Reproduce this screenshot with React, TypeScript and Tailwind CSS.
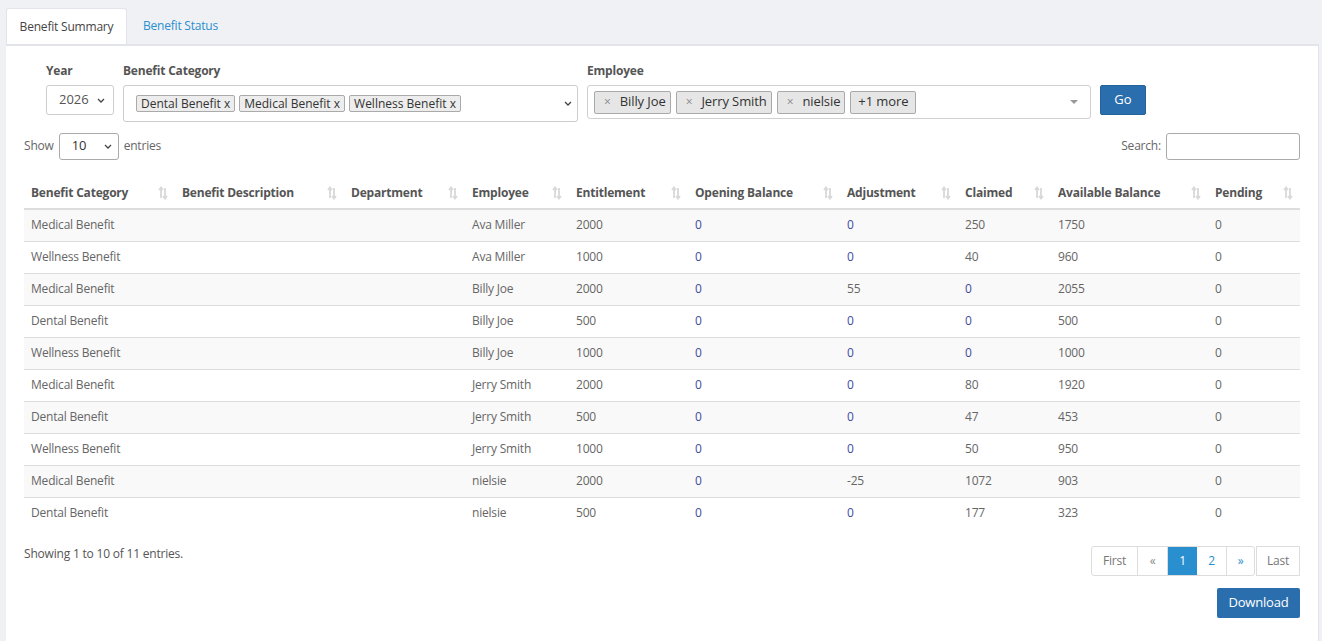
import React from "react";

type Row = {
  cat: string;
  emp: string;
  ent: string;
  open: string;
  adj: string;
  claimed: string;
  avail: string;
  pending: string;
};

const rows: Row[] = [
  { cat: "Medical Benefit", emp: "Ava Miller", ent: "2000", open: "0", adj: "0", claimed: "250", avail: "1750", pending: "0" },
  { cat: "Wellness Benefit", emp: "Ava Miller", ent: "1000", open: "0", adj: "0", claimed: "40", avail: "960", pending: "0" },
  { cat: "Medical Benefit", emp: "Billy Joe", ent: "2000", open: "0", adj: "55", claimed: "0", avail: "2055", pending: "0" },
  { cat: "Dental Benefit", emp: "Billy Joe", ent: "500", open: "0", adj: "0", claimed: "0", avail: "500", pending: "0" },
  { cat: "Wellness Benefit", emp: "Billy Joe", ent: "1000", open: "0", adj: "0", claimed: "0", avail: "1000", pending: "0" },
  { cat: "Medical Benefit", emp: "Jerry Smith", ent: "2000", open: "0", adj: "0", claimed: "80", avail: "1920", pending: "0" },
  { cat: "Dental Benefit", emp: "Jerry Smith", ent: "500", open: "0", adj: "0", claimed: "47", avail: "453", pending: "0" },
  { cat: "Wellness Benefit", emp: "Jerry Smith", ent: "1000", open: "0", adj: "0", claimed: "50", avail: "950", pending: "0" },
  { cat: "Medical Benefit", emp: "nielsie", ent: "2000", open: "0", adj: "-25", claimed: "1072", avail: "903", pending: "0" },
  { cat: "Dental Benefit", emp: "nielsie", ent: "500", open: "0", adj: "0", claimed: "177", avail: "323", pending: "0" },
];

const columns = [
  { label: "Benefit Category", w: "w-[151px]" },
  { label: "Benefit Description", w: "w-[169px]" },
  { label: "Department", w: "w-[121px]" },
  { label: "Employee", w: "w-[104px]" },
  { label: "Entitlement", w: "w-[119px]" },
  { label: "Opening Balance", w: "w-[152px]" },
  { label: "Adjustment", w: "w-[118px]" },
  { label: "Claimed", w: "w-[93px]" },
  { label: "Available Balance", w: "w-[157px]" },
  { label: "Pending", w: "w-[92px]" },
];

function SortIcon() {
  return (
    <svg width="10" height="14" viewBox="0 0 10 14" className="shrink-0">
      <path d="M3 1.5 L3 12 M1 4 L3 1.5 L5 4" stroke="#d9d9d9" strokeWidth="1.8" fill="none" />
      <path d="M7 2 L7 12.5 M5 10 L7 12.5 L9 10" stroke="#d9d9d9" strokeWidth="1.8" fill="none" />
    </svg>
  );
}

function Chevron() {
  return (
    <svg width="8" height="5" viewBox="0 0 8 5">
      <path d="M1 1 L4 4 L7 1" stroke="#444" strokeWidth="1.3" fill="none" />
    </svg>
  );
}

// zero values render as links in the source page
function Num({ v, link }: { v: string; link?: boolean }) {
  return <span className={link ? "text-[#3f4a9c]" : ""}>{v}</span>;
}

export default function App() {
  return (
    <div
      className="min-h-[641px] bg-[#f0f1f5] pt-2 pl-[6px] pr-[3px] text-[13px] text-[#666]"
      style={{ fontFamily: '"Open Sans", "Liberation Sans", sans-serif' }}
    >
      {/* Tabs */}
      <div className="flex">
        <div className="h-9 w-[121px] bg-white rounded-t-[3px] border-t border-x border-[#e2e4ea] flex items-center justify-center text-[#444] text-[12px] tracking-[-0.2px]">
          Benefit Summary
        </div>
        <div className="h-9 w-[107px] flex items-center justify-center text-[#2a8fcf] text-[12px] tracking-[-0.2px]">
          Benefit Status
        </div>
      </div>

      {/* Panel */}
      <div className="bg-white border-t-2 border-r border-[#e2e4ea] min-h-[597px] pl-[18px] pr-[18px] pt-[17px]">
        {/* Filters */}
        <div className="flex items-start pl-[22px]">
          <div className="w-[77px]">
            <div className="font-bold text-[12px] text-[#555] h-[22px] leading-[16px] tracking-[-0.2px]">Year</div>
            <div className="h-[30px] w-[68px] border border-[#ccc] rounded-[3px] flex items-center justify-between pl-[12px] pr-[8px] text-[#555]">
              2026 <Chevron />
            </div>
          </div>
          <div className="w-[464px]">
            <div className="font-bold text-[12px] text-[#555] h-[22px] leading-[16px] tracking-[-0.2px]">Benefit Category</div>
            <div className="h-[37px] w-[455px] border border-[#ccc] rounded-[3px] flex items-center justify-between pl-[12px] pr-[5px]">
              <div className="flex gap-[4px] text-[12px] text-[#333]">
                {["Dental Benefit", "Medical Benefit", "Wellness Benefit"].map((t) => (
                  <span key={t} className="h-[17px] px-[4px] border border-[#aaa] bg-[#ededed] rounded-[2px] flex items-center leading-none">
                    {t} x
                  </span>
                ))}
              </div>
              <Chevron />
            </div>
          </div>
          <div className="w-[513px]">
            <div className="font-bold text-[12px] text-[#555] h-[22px] leading-[16px] tracking-[-0.2px]">Employee</div>
            <div className="h-[34px] w-[504px] border border-[#d0d0d0] rounded-[3px] flex items-center justify-between pl-[6px] pr-[12px]">
              <div className="flex gap-[5px] text-[13px] text-[#333] tracking-[-0.1px]">
                {["Billy Joe", "Jerry Smith", "nielsie"].map((t) => (
                  <span key={t} className="h-[23px] pl-[9px] pr-[4px] border border-[#aaa] bg-[#e6e6e6] rounded-[2px] flex items-center gap-[9px]">
                    <span className="text-[#888] text-[12px]">×</span>
                    {t}
                  </span>
                ))}
                <span className="h-[23px] px-[7px] border border-[#aaa] bg-[#e6e6e6] rounded-[2px] flex items-center">+1 more</span>
              </div>
              <svg width="8" height="5" viewBox="0 0 8 5">
                <path d="M0 0 L8 0 L4 4 Z" fill="#999" />
              </svg>
            </div>
          </div>
          <div className="pt-[22px]">
            <button className="h-[30px] w-[46px] bg-[#2a6ead] border border-[#25619a] text-white text-[13px] rounded-[2px]">Go</button>
          </div>
        </div>

        {/* Show / Search */}
        <div className="flex items-center justify-between mt-[10px] h-[28px]">
          <div className="flex items-center gap-[5px] text-[12px] tracking-[-0.2px]">
            Show
            <div className="h-[27px] w-[60px] border border-[#aaa] rounded-[3px] flex items-center justify-between pl-[12px] pr-[6px] text-[#333] text-[13px]">
              10 <Chevron />
            </div>
            entries
          </div>
          <div className="flex items-center gap-[5px] text-[12px] tracking-[-0.2px]">
            Search:
            <div className="h-[27px] w-[134px] border border-[#aaa] rounded-[3px]" />
          </div>
        </div>

        {/* Table */}
        <table className="mt-[17px] w-full table-fixed border-collapse text-[12px] tracking-[-0.2px]">
          <thead>
            <tr className="border-b-2 border-[#ddd]">
              {columns.map((c) => (
                <th key={c.label} className={`${c.w} h-[32px] pl-[7px] pr-[7px] text-left font-bold text-[#555]`}>
                  <div className="flex items-center justify-between">
                    <span>{c.label}</span>
                    <SortIcon />
                  </div>
                </th>
              ))}
            </tr>
          </thead>
          <tbody>
            {rows.map((r, i) => (
              <tr key={i} className={`h-[32px] border-b border-[#ddd] last:border-b-0 ${i % 2 === 0 ? "bg-[#f9f9f9]" : "bg-white"}`}>
                <td className="pl-[7px]">{r.cat}</td>
                <td className="pl-[7px]" />
                <td className="pl-[7px]" />
                <td className="pl-[7px]">{r.emp}</td>
                <td className="pl-[7px]">{r.ent}</td>
                <td className="pl-[7px]"><Num v={r.open} link /></td>
                <td className="pl-[7px]"><Num v={r.adj} link={r.adj === "0"} /></td>
                <td className="pl-[7px]"><Num v={r.claimed} link={r.claimed === "0"} /></td>
                <td className="pl-[7px]">{r.avail}</td>
                <td className="pl-[7px]">{r.pending}</td>
              </tr>
            ))}
          </tbody>
        </table>

        {/* Footer */}
        <div className="flex justify-between items-start mt-[17px]">
          <div className="text-[12px] tracking-[-0.2px] text-[#555] leading-[16px]">Showing 1 to 10 of 11 entries.</div>
          <div className="flex text-[12px] tracking-[-0.2px]">
            <div className="flex border border-[#ddd] rounded-[3px]">
              <span className="h-[28px] w-[46px] flex items-center justify-center text-[#777] border-r border-[#ddd]">First</span>
              <span className="h-[28px] w-[30px] flex items-center justify-center text-[#888] border-r border-[#ddd]">«</span>
              <span className="h-[28px] w-[29px] flex items-center justify-center text-white bg-[#2a8fcf]">1</span>
              <span className="h-[28px] w-[30px] flex items-center justify-center text-[#2a8fcf] border-r border-[#ddd]">2</span>
              <span className="h-[28px] w-[27px] flex items-center justify-center text-[#2a8fcf]">»</span>
            </div>
            <span className="ml-[1px] h-[30px] w-[44px] flex items-center justify-center text-[#777] border border-[#ddd]">Last</span>
          </div>
        </div>
        <div className="flex justify-end mt-[12px]">
          <button className="h-[30px] w-[83px] bg-[#2a6ead] text-white text-[13px] rounded-[2px] tracking-[-0.2px]">Download</button>
        </div>
      </div>
    </div>
  );
}
